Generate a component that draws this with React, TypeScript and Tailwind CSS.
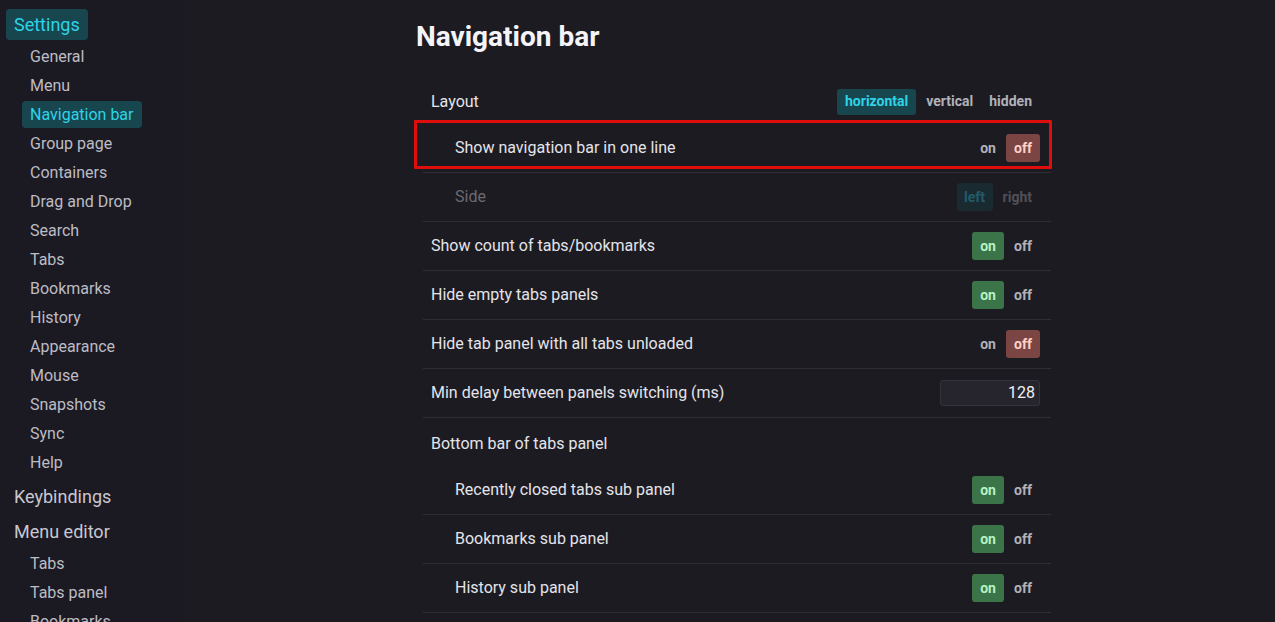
import React from "react";

const sub = ["General","Menu","Navigation bar","Group page","Containers","Drag and Drop","Search","Tabs","Bookmarks","History","Appearance","Mouse","Snapshots","Sync","Help"];

function OnOff({ on, dim }: { on: boolean; dim?: boolean }) {
  return (
    <div className={"flex items-center gap-[2px] text-[14px] font-bold " + (dim ? "opacity-40" : "")}>
      {on ? (
        <>
          <span className="h-[28px] w-[32px] flex items-center justify-center rounded-[3px] bg-[#3b7448] text-[#b6f2c2]">on</span>
          <span className="h-[28px] w-[34px] flex items-center justify-center text-[#b2b1b9]">off</span>
        </>
      ) : (
        <>
          <span className="h-[28px] w-[32px] flex items-center justify-center text-[#b2b1b9]">on</span>
          <span className="h-[28px] w-[34px] flex items-center justify-center rounded-[3px] bg-[#7a4542] text-[#ffd0c8]">off</span>
        </>
      )}
    </div>
  );
}

function Row({ label, indent, children, border = true, h = 48, dim, extra = "" }: { label: string; indent?: boolean; children?: React.ReactNode; border?: boolean; h?: number; dim?: boolean; extra?: string }) {
  return (
    <div
      className={"flex items-center justify-between pr-[11px] " + (indent ? "pl-[32px] " : "pl-[8px] ") + (border ? "border-b border-[#2f2e36] " : "") + extra}
      style={{ height: h + (border ? 1 : 0) }}
    >
      <span className={"text-[16px] " + (dim ? "text-[#6b6a72]" : "text-[#e4e4ea]")}>{label}</span>
      {children}
    </div>
  );
}

export default function App() {
  return (
    <div className="flex w-[1275px] h-[622px] overflow-hidden bg-[#1c1b22]" style={{ fontFamily: "Roboto, 'Liberation Sans', sans-serif" }}>
      <div className="w-[185px] shrink-0 bg-[#1b1a23] pl-[6px] pt-[9px]">
        <div className="inline-block rounded-[4px] bg-[#17464f] px-[8px] h-[31px] leading-[31px] text-[18px] text-[#2fd3e6]">Settings</div>
        <div className="flex flex-col pl-[16px] mt-[2px]">
          {sub.map((s) => (
            <div key={s} className="h-[29px] flex items-center">
              <span className={"px-[8px] h-[27px] leading-[27px] rounded-[4px] text-[16px] " + (s === "Navigation bar" ? "bg-[#17464f] text-[#2fd3e6]" : "text-[#bdbcc4]")}>{s}</span>
            </div>
          ))}
        </div>
        <div className="pl-[8px] h-[34px] flex items-center mt-[2px] text-[18px] text-[#c8c7cf]">Keybindings</div>
        <div className="pl-[8px] h-[36px] flex items-center text-[18px] text-[#c8c7cf]">Menu editor</div>
        <div className="flex flex-col pl-[24px]">
          {["Tabs", "Tabs panel", "Bookmarks"].map((s) => (
            <div key={s} className="h-[29px] flex items-center text-[16px] text-[#bdbcc4]">{s}</div>
          ))}
        </div>
      </div>
      <div className="flex-1 pl-[230px]">
        <div className="w-[636px]">
          <div className="h-[79px] pt-[18px] pl-[1px] text-[28px] font-bold text-[#f4f4f8] leading-[38px]">Navigation bar</div>
          <div className="ml-[8px]">
            <Row label="Layout" border={false} h={45}>
              <div className="flex items-center gap-[10px] text-[14px] font-bold text-[#b2b1b9]">
                <span className="h-[26px] px-[8px] flex items-center rounded-[3px] bg-[#17464f] text-[#2fd3e6]">horizontal</span>
                <span>vertical</span>
                <span className="ml-[6px] mr-[8px]">hidden</span>
              </div>
            </Row>
            <div className="relative">
              <Row label="Show navigation bar in one line" indent>
                <OnOff on={false} />
              </Row>
              <div className="absolute left-[-9px] right-[-1px] top-[-4px] h-[49px] border-[3px] border-[#e00d0d] rounded-[1px] pointer-events-none" />
            </div>
            <Row label="Side" indent dim>
              <div className="flex items-center gap-[10px] text-[14px] font-bold opacity-35">
                <span className="h-[28px] w-[36px] flex items-center justify-center rounded-[3px] bg-[#17464f] text-[#2fd3e6]">left</span>
                <span className="mr-[8px] text-[#b2b1b9]">right</span>
              </div>
            </Row>
            <Row label="Show count of tabs/bookmarks"><OnOff on /></Row>
            <Row label="Hide empty tabs panels"><OnOff on /></Row>
            <Row label="Hide tab panel with all tabs unloaded"><OnOff on={false} /></Row>
            <Row label="Min delay between panels switching (ms)">
              <div className="w-[100px] h-[26px] rounded-[3px] border border-[#34333c] bg-[#26252d] text-right pr-[4px] text-[16px] leading-[24px] text-[#f0f0f4]">128</div>
            </Row>
            <Row label="Bottom bar of tabs panel" border={false} h={48} extra="pt-[4px]" />
            <Row label="Recently closed tabs sub panel" indent><OnOff on /></Row>
            <Row label="Bookmarks sub panel" indent><OnOff on /></Row>
            <Row label="History sub panel" indent><OnOff on /></Row>
          </div>
        </div>
      </div>
    </div>
  );
}
